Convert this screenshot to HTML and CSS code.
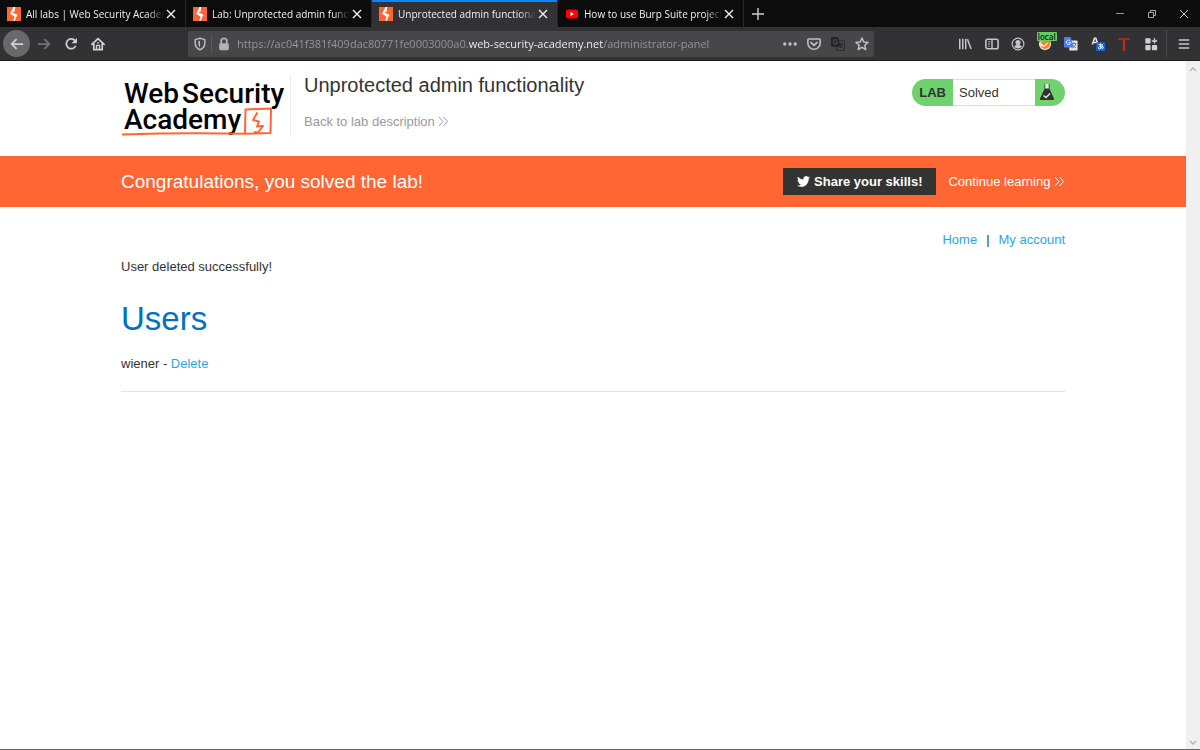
FILE: index.html
```html
<!DOCTYPE html>
<html lang="en">
<head>
  <meta charset="UTF-8">
  <title>Unprotected admin functionality</title>
  <link rel="stylesheet" href="styles.css">
</head>
<body>

<!-- shared shapes -->
<svg class="defs" aria-hidden="true">
  <symbol id="burp" viewBox="0 0 14 14">
    <rect width="14" height="14" fill="#ff6633"/>
    <path d="M6.600 0h1.600L7.600 4.400 5.400 5.600 10.600 7.800 8.600 11.200 8 14H6.400L7.400 9.600 3 6.800z" fill="#fff"/>
  </symbol>
  <symbol id="close" viewBox="0 0 10 10">
    <path d="M1 1l8 8M9 1l-8 8" fill="none" stroke="currentColor" stroke-width="1.4"/>
  </symbol>
  <symbol id="chevrons" viewBox="0 0 11 11">
    <path d="M1 1l4 4.5-4 4.5M5.500 1l4 4.500-4 4.500" fill="none" stroke="currentColor" stroke-width="1"/>
  </symbol>
</svg>

<header class="browser">
  <div class="tabs">
    <div class="tab">
      <svg class="favicon"><use href="#burp"/></svg>
      <button class="tab-title">All labs | Web Security Academy</button>
      <button class="tab-close" aria-label="Close tab"><svg><use href="#close"/></svg></button>
    </div>
    <div class="tab">
      <svg class="favicon"><use href="#burp"/></svg>
      <button class="tab-title">Lab: Unprotected admin functionality</button>
      <button class="tab-close" aria-label="Close tab"><svg><use href="#close"/></svg></button>
    </div>
    <div class="tab active">
      <svg class="favicon"><use href="#burp"/></svg>
      <button class="tab-title">Unprotected admin functionality</button>
      <button class="tab-close" aria-label="Close tab"><svg><use href="#close"/></svg></button>
    </div>
    <div class="tab">
      <svg class="favicon" viewBox="0 0 14 14"><rect x="1" y="2.500" width="12" height="9" rx="2" fill="#f00"/><path d="M5.500 5v4L9 7z" fill="#fff"/></svg>
      <button class="tab-title">How to use Burp Suite projects</button>
      <button class="tab-close" aria-label="Close tab"><svg><use href="#close"/></svg></button>
    </div>
    <button class="new-tab" aria-label="New tab">
      <svg width="12" height="12" viewBox="0 0 12 12"><path d="M6 0v12M0 6h12" stroke="#d0d0d2" stroke-width="1.400"/></svg>
    </button>
    <div class="window-buttons">
      <button aria-label="Minimize"><svg width="10" height="10" viewBox="0 0 10 10"><path d="M1 4.500h8" stroke="#999"/></svg></button>
      <button aria-label="Restore"><svg width="10" height="10" viewBox="0 0 10 10"><path d="M1.500 3.500h5v5h-5zM3.500 3.500v-2h5v5h-2" fill="none" stroke="#aaa"/></svg></button>
      <button aria-label="Close"><svg width="10" height="10" viewBox="0 0 10 10"><path d="M1 1l8 8M9 1L1 9" stroke="#ccc"/></svg></button>
    </div>
  </div>

  <div class="toolbar">
    <div class="nav-buttons">
      <button class="back" aria-label="Back"><svg viewBox="0 0 16 16"><path d="M15 8H2M7.500 2.500 2 8l5.500 5.500" fill="none" stroke="#d2d2d4" stroke-width="2"/></svg></button>
      <button aria-label="Forward"><svg viewBox="0 0 16 16"><path d="M1 8h13M8.500 2.500 14 8l-5.500 5.500" fill="none" stroke="#77777a" stroke-width="2"/></svg></button>
      <button aria-label="Reload"><svg viewBox="0 0 16 16"><path d="M12.600 4.200A5.600 5.600 0 1 0 13.400 10" fill="none" stroke="#d2d2d4" stroke-width="2"/><path d="M14.800 1v6.200H8.600z" fill="#d2d2d4"/></svg></button>
      <button aria-label="Home"><svg viewBox="0 0 16 16"><path d="M1 8.500 8 1.800l7 6.700M3.200 7.500v7h9.600v-7" fill="none" stroke="#d2d2d4" stroke-width="2" stroke-linejoin="round" stroke-linecap="round"/><path d="M6.300 14.500V9.500h3.400v5M8 5.600v2" stroke="#d2d2d4" stroke-width="1.500" fill="none"/></svg></button>
    </div>

    <div class="urlbar">
      <button class="shield" aria-label="Tracking protection"><svg viewBox="0 0 16 16"><path d="M8 1.500 13.500 3v4c0 3.500-2 6-5.500 7.600C4.500 13 2.500 10.500 2.500 7V3z" fill="none" stroke="#bbbbbd" stroke-width="1.700" stroke-linejoin="round"/><path d="M8 4.200 6.200 4.700V8c0 1.500.6 2.800 1.800 4z" fill="#bbbbbd"/></svg></button>
      <button aria-label="Site information"><svg viewBox="0 0 16 16"><rect x="2.500" y="7" width="11" height="8" rx="1.500" fill="#b2b2b4"/><path d="M4.800 8V4.800a3.200 3.200 0 0 1 6.400 0V8" fill="none" stroke="#b2b2b4" stroke-width="2"/></svg></button>
      <input class="url" type="text" aria-label="Address" value="https://ac041f381f409dac80771fe0003000a0.web-security-academy.net/administrator-panel">
      <div class="page-actions">
        <button aria-label="Page actions"><svg viewBox="0 0 16 16" fill="#c0c0c2"><circle cx="2" cy="8" r="1.900"/><circle cx="8" cy="8" r="1.900"/><circle cx="14" cy="8" r="1.900"/></svg></button>
        <button aria-label="Save to Pocket"><svg viewBox="0 0 16 16"><path d="M2 2.200h12q1 0 1 1V7a7 7 0 0 1-14 0V3.200q0-1 1-1z" fill="none" stroke="#c0c0c2" stroke-width="1.800"/><path d="M4.700 6.300 8 9.500l3.300-3.200" fill="none" stroke="#c0c0c2" stroke-width="2" stroke-linecap="round"/></svg></button>
        <button aria-label="Translate page"><svg viewBox="0 0 16 16"><rect x="6.500" y="4.500" width="9" height="11" fill="#48484a" stroke="#2b2b2d"/><path d="M9 8h5M11.500 6.500V8M13.500 8q-1 3-4 4.500M10 9.500l3.500 3.500" fill="none" stroke="#252527"/><path d="M1 0h7l3 11H1q-1 0-1-1V1q0-1 1-1z" fill="#252527"/><path d="M7 4a2.500 2.500 0 1 0 .5 2H5" fill="none" stroke="#4c4c4f" stroke-width="1.200"/></svg></button>
        <button aria-label="Bookmark this page"><svg viewBox="0 0 16 16"><path d="m8 1.200 2 4.500 4.900.5-3.700 3.200 1.100 4.900L8 11.800l-4.300 2.500 1.100-4.900L1.100 6.200 6 5.700z" fill="none" stroke="#c0c0c2" stroke-width="1.700" stroke-linejoin="round"/></svg></button>
      </div>
    </div>

    <div class="extensions">
      <button aria-label="Library"><svg viewBox="0 0 16 16"><path d="M2 2v12M5.400 2v12M8.800 2v12M10.800 2.500l4.200 11.300" stroke="#c6c6c8" stroke-width="1.700"/></svg></button>
      <button aria-label="Sidebars"><svg viewBox="0 0 16 16"><rect x="1" y="2.500" width="14" height="11" rx="2" fill="none" stroke="#c6c6c8" stroke-width="1.800"/><path d="M8 3v10" stroke="#c6c6c8" stroke-width="1.600"/><path d="M3.500 5.500h2.500M3.500 8h2.500M3.500 10.500h1.500" stroke="#c6c6c8"/></svg></button>
      <button aria-label="Account"><svg viewBox="0 0 16 16"><circle cx="8" cy="8" r="6.700" fill="none" stroke="#c6c6c8" stroke-width="1.300"/><circle cx="8" cy="6.300" r="2.900" fill="#c6c6c8"/><path d="M3.500 11q1-1.800 2.800-1.800h3.400q1.800 0 2.800 1.800Q10.800 13 8 13t-4.500-2z" fill="#c6c6c8"/></svg></button>
      <button class="proxy" aria-label="FoxyProxy"><svg viewBox="0 0 16 16"><circle cx="8" cy="8" r="7" fill="#e5e2dc"/><path d="M2 5c3 0 5 0 8-2l5 1-2 7-5 3-5-3 3-2z" fill="#e98a25"/><path d="M4 10l3 .5 4-3.500" stroke="#fff" stroke-width="1.200" fill="none"/></svg><span class="badge">local</span></button>
      <button aria-label="Google Translate"><svg viewBox="0 0 16 16"><rect x="6" y="4" width="9.500" height="11.500" rx="1" fill="#e4e4e4"/><path d="M9 7.500h5M11.500 6v1.500M13.500 8q-1 3-3.500 4.500M10.500 9.500l3 3" fill="none" stroke="#666"/><path d="M1.200 0h6.500l3.500 12h-10Q0 12 0 11V1q0-1 1.200-1z" fill="#4a80e8"/><path d="M7.200 4.500a2.500 2.500 0 1 0 .5 2H5.200" fill="none" stroke="#fff"/></svg></button>
      <button aria-label="Japanese reader"><svg viewBox="0 0 16 16"><path d="M1.500 8.500 4 1.500h1.500L8 8.500M2.500 6.200h4.500" fill="none" stroke="#e4e4e4" stroke-width="1.800"/><rect x="6" y="6" width="10" height="10" rx="1" fill="#1268e8"/><path d="M8.500 8.700h5M10.700 7.300q-.3 3 .6 6M13 10q-1 3.500-3.300 3.500-1.400 0-1-1.500.7-1.700 3.300-1.700 2.600.3 2 2-.4 1-1.500 1.400" fill="none" stroke="#fff"/></svg></button>
      <button aria-label="Text tool"><svg viewBox="0 0 16 16"><path d="M1.500 1.500h13l.5 3-1-1.300H9.300V14l1.200 1.500h-5L6.800 14V3.200H2.500L1.200 4.500z" fill="#c4291b"/></svg></button>
      <button aria-label="Extensions"><svg viewBox="0 0 16 16" fill="#d0d0d2"><rect x="1.500" y="1.500" width="6" height="6" rx="1"/><rect x="1.500" y="9" width="6" height="6" rx="1"/><rect x="9" y="9" width="6" height="6" rx="1"/><path d="M11.200 1.500h1.600v2.200H15v1.600h-2.200v2.200h-1.600V5.300H9V3.700h2.200z"/></svg></button>
    </div>
    <button class="menu" aria-label="Open menu"><svg viewBox="0 0 16 16"><path d="M2 3.500h12M2 8h12M2 12.500h12" stroke="#c6c6c8" stroke-width="1.700"/></svg></button>
  </div>
</header>

<div class="viewport">
  <div class="page">
    <div class="lab-header container">
      <a class="logo" href="#">
        <svg width="169" height="62" viewBox="0 0 169 62" role="img" aria-label="Web Security Academy">
          <text x="3" y="28">Web</text>
          <text x="61" y="28">Security</text>
          <text x="3" y="54">Academy</text>
          <path d="M1 59.500Q60 57.500 124 58.700L124.500 34.500 150 33.500 149.500 58 124 58.700" fill="none" stroke="#ff6633" stroke-width="2" stroke-linejoin="round"/>
          <path d="M136.500 37.500 132 45 138 46.500 136 51.500 142 51 137 57.500 133 57" fill="none" stroke="#ff6633" stroke-width="2" stroke-linejoin="round"/>
        </svg>
      </a>
      <div class="title">
        <h2>Unprotected admin functionality</h2>
        <a href="#">Back to lab description <svg class="chevrons"><use href="#chevrons"/></svg></a>
      </div>
      <div class="status">
        <span class="status-lab">LAB</span>
        <span class="status-text">Solved</span>
        <svg width="30" height="26" viewBox="0 0 30 26"><path d="M9.500 5h5v5l4.500 9.500q.5 1.500-1 1.500H6q-1.500 0-1-1.500L9.500 10z" fill="#333332"/><path d="M10.300 5h3.400v4.500h-3.400z" fill="#e8f8e6"/><path d="M8.500 16.500 11 18.500 15 14.500" fill="none" stroke="#d8f5d5" stroke-width="1.400"/></svg>
      </div>
    </div>

    <div class="banner container">
      <h4>Congratulations, you solved the lab!</h4>
      <button class="share">
        <svg width="13" height="11" viewBox="0 0 24 20"><path d="M24 2.400c-.9.400-1.800.7-2.800.8 1-.6 1.800-1.600 2.200-2.700-1 .6-2 1-3.100 1.200A4.900 4.900 0 0 0 11.900 6.200C7.800 6 4.200 4 1.700 1 .4 3.200 1 6.100 3.200 7.600c-.8 0-1.600-.2-2.200-.6 0 2.300 1.600 4.400 3.900 4.900-.7.200-1.500.2-2.200.1.600 2 2.400 3.400 4.600 3.400A9.900 9.900 0 0 1 0 17.500 14 14 0 0 0 7.500 19.700c9.100 0 14.300-7.700 14-14.600 1-.7 1.800-1.600 2.500-2.700z" fill="#fff"/></svg>
        Share your skills!
      </button>
      <a href="#">Continue learning <svg class="chevrons"><use href="#chevrons"/></svg></a>
    </div>

    <main class="container">
      <nav class="links"><a href="#">Home</a><span>|</span><a href="#">My account</a></nav>
      <p class="message">User deleted successfully!</p>
      <section>
        <h1>Users</h1>
        <div>wiener - <a href="#">Delete</a></div>
      </section>
      <hr>
    </main>
  </div>

  <div class="scrollbar">
    <svg width="8" height="6" viewBox="0 0 8 6"><path d="M1 5l3-3 3 3" fill="none" stroke="#b4b4b4" stroke-width="1.400"/></svg>
    <svg width="8" height="6" viewBox="0 0 8 6"><path d="M1 1l3 3 3-3" fill="none" stroke="#b4b4b4" stroke-width="1.400"/></svg>
  </div>
</div>

</body>
</html>
```
FILE: styles.css
```css
* {
  box-sizing: border-box;
}
body {
  margin: 0;
  height: 100vh;
  display: flex;
  flex-direction: column;
  font-family: "Liberation Sans", Arial, sans-serif;
  font-size: 13px;
  line-height: 20px;
  color: #333332;
  background: white;
  border-bottom: 1px solid #666;
}
button {
  padding: 0;
  border: none;
  background: none;
  font: inherit;
  color: inherit;
  cursor: pointer;
}
a {
  color: #29a8df;
  text-decoration: none;
}
h1, h2, h4, p {
  margin: 0;
  font-weight: normal;
}
svg {
  display: block;
}
.defs {
  display: none;
}

/* browser chrome */
.browser {
  font-family: "Open Sans", "Segoe UI", sans-serif;
  color: #f0f0f2;
}
.tabs {
  display: flex;
  height: 27px;
  background: #0c0c0d;
}
.tab {
  display: flex;
  align-items: center;
  flex: 0 1 186px;
  min-width: 0;
  padding: 0 9px 0 7px;
  border-right: 1px solid #29292b;
}
.tab.active {
  background: #323234;
  box-shadow: inset 0 2px #0a84ff;
}
.favicon {
  width: 14px;
  height: 14px;
  flex: none;
}
.tab-title {
  flex: 1;
  min-width: 0;
  margin: 0 2px 0 5px;
  overflow: hidden;
  white-space: nowrap;
  text-align: left;
  font-size: 10px;
  mask-image: linear-gradient(to right, black 88%, transparent);
}
.tab-close svg {
  width: 10px;
  height: 10px;
}
.new-tab {
  width: 28px;
  display: grid;
  place-items: center;
}
.window-buttons {
  display: flex;
  margin-left: auto;
}
.window-buttons button {
  width: 32px;
  display: grid;
  place-items: center;
}
.toolbar {
  display: flex;
  align-items: center;
  height: 34px;
  background: #323234;
  border-bottom: 1px solid #1c1c1e;
}
.toolbar button {
  display: grid;
  place-items: center;
}
.toolbar svg {
  width: 14px;
  height: 14px;
}
.nav-buttons {
  display: flex;
  width: 188px;
  padding-left: 3px;
}
.nav-buttons button {
  width: 27px;
  height: 27px;
}
.nav-buttons .back {
  border-radius: 50%;
  background: #69696b;
}
.urlbar {
  display: flex;
  align-items: center;
  flex: 1;
  height: 26px;
  background: #474749;
  border-radius: 2px;
}
.urlbar button {
  width: 24px;
  height: 18px;
}
.urlbar .shield {
  border-right: 1px solid #5a5a5c;
}
.url {
  flex: 1;
  min-width: 0;
  margin-left: 1px;
  padding: 0;
  border: none;
  outline: none;
  font: 11px/18px "Open Sans", "Segoe UI", sans-serif;
  /* the domain is brighter than the rest of the address */
  background: linear-gradient(to right, #98989b 231px, #f9f9fa 231px, #f9f9fa 366px, #98989b 366px);
  background-clip: text;
  color: transparent;
}
.page-actions {
  display: flex;
}
.extensions {
  display: flex;
  justify-content: space-between;
  width: 210px;
  margin-left: 79px;
}
.extensions button {
  width: 24px;
  height: 24px;
}
.proxy {
  position: relative;
}
.badge {
  position: absolute;
  top: 0;
  left: 4px;
  padding: 0 1px;
  background: #66cc66;
  border-radius: 1px;
  color: #10220f;
  font-size: 8px;
  font-weight: 600;
  line-height: 9px;
}
.toolbar .menu {
  width: 34px;
  height: 27px;
  margin-left: 3px;
  border-left: 1px solid #48484a;
}

/* web page */
.viewport {
  display: flex;
  flex: 1;
}
.page {
  flex: 1;
}
.container {
  padding-left: 121px;
  padding-right: 121px;
}
.lab-header {
  display: flex;
  align-items: flex-start;
  height: 95px;
  padding-top: 14px;
}
.logo {
  border-right: 1px solid #ececec;
}
.logo text {
  font-family: Roboto, "Open Sans", sans-serif;
  font-size: 28px;
  font-weight: 500;
  fill: black;
}
.title {
  padding-left: 13px;
}
.title h2 {
  font-size: 20px;
  line-height: 20px;
  margin-bottom: 17px;
}
.title a {
  display: block;
  color: #999;
}
.chevrons {
  display: inline-block;
  width: 11px;
  height: 11px;
  vertical-align: -1px;
}
.status {
  display: flex;
  margin: 4px 0 0 auto;
  height: 27px;
  line-height: 27px;
  border-radius: 14px;
  background: #6fd26f;
  overflow: hidden;
}
.status-lab {
  padding: 0 7px;
  font-weight: bold;
}
.status-text {
  width: 82px;
  padding-left: 6px;
  background: white;
  border: solid #c5edc2;
  border-width: 1px 0;
  line-height: 25px;
}
.banner {
  display: flex;
  align-items: center;
  height: 51px;
  background: #ff6633;
  color: white;
}
.banner h4 {
  flex: 1;
  font-size: 19px;
}
.share {
  display: flex;
  align-items: center;
  gap: 4px;
  height: 27px;
  padding: 0 14px;
  margin-right: 12px;
  background: #333332;
  font-weight: bold;
}
.banner a {
  color: white;
}
.links {
  display: flex;
  justify-content: flex-end;
  gap: 9px;
  padding-top: 23px;
}
.message {
  padding-top: 7px;
}
h1 {
  padding: 22px 0 15px;
  font-size: 33px;
  line-height: 40px;
  color: #0071bd;
}
hr {
  margin: 17px 0 0;
  border: none;
  border-top: 1px solid #e3e3e3;
}
.scrollbar {
  display: flex;
  flex-direction: column;
  justify-content: space-between;
  align-items: center;
  width: 14px;
  padding: 5px 0 3px;
  background: #f0f0f0;
}
```
